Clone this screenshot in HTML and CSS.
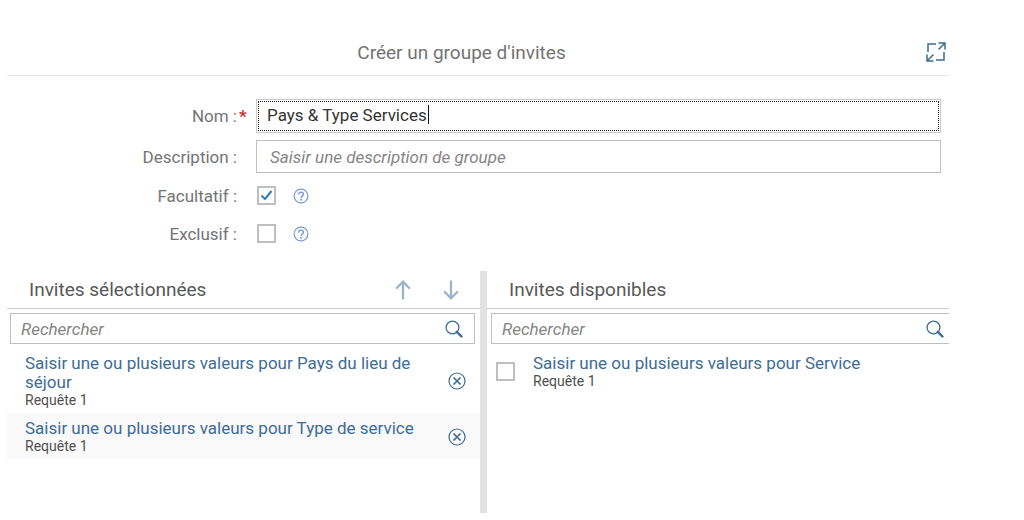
FILE: index.html
```html
<!DOCTYPE html>
<html lang="fr">
<head>
<meta charset="utf-8">
<title>Créer un groupe d'invites</title>
<link rel="stylesheet" href="styles.css">
</head>
<body>
<svg class="sprite" aria-hidden="true">
  <symbol id="search" viewBox="0 0 18 18"><circle cx="7.500" cy="7.500" r="6.400" fill="none" stroke="currentColor" stroke-width="1.300"/><path d="M11.800 11.800 16.500 16.500" stroke="currentColor" stroke-width="2.400" stroke-linecap="round"/></symbol>
  <symbol id="remove" viewBox="0 0 18 18"><circle cx="9" cy="9" r="8" fill="none" stroke="currentColor" stroke-width="1.200"/><path d="M5.500 5.500 12.500 12.500M12.500 5.500 5.500 12.500" stroke="currentColor" stroke-width="1.700"/></symbol>
  <symbol id="help" viewBox="0 0 16 16"><circle cx="8" cy="8" r="6.900" fill="none" stroke="currentColor" stroke-width="1.200"/><path d="M5.700 6.400C5.700 3.300 10.400 3.400 10.400 6.200 10.400 7.900 8.100 7.900 8.100 9.900" fill="none" stroke="currentColor" stroke-width="1.400"/><circle cx="8.100" cy="11.800" r="1"/></symbol>
</svg>
<main class="dialog">
  <header class="dialog-header">
    <h1 class="dialog-title">Créer un groupe d'invites</h1>
    <button class="icon-button expand" type="button" aria-label="Agrandir">
      <svg width="20" height="20" viewBox="0 0 20 20" fill="none" stroke="currentColor" stroke-width="1.500"><path d="M2 10V2H10M10 18H18V10M12.500 1H19V7.500M18.500 1.500 12.500 7.500M1 12.500V19H7.500M1.500 18.500 7.500 12.500"/></svg>
    </button>
  </header>
  <form class="form">
    <div class="row">
      <label class="label required" for="nom">Nom :</label>
      <div class="field focused"><input id="nom" class="text" type="text" value="Pays &amp; Type Services" required><span class="caret"></span></div>
    </div>
    <div class="row">
      <label class="label" for="desc">Description :</label>
      <div class="field"><input id="desc" class="text" type="text" placeholder="Saisir une description de groupe"></div>
    </div>
    <div class="row">
      <label class="label" for="fac">Facultatif :</label>
      <div class="options"><input id="fac" class="check" type="checkbox" checked><button class="icon-button help" type="button" aria-label="Aide"><svg width="16" height="16" fill="currentColor"><use href="#help"/></svg></button></div>
    </div>
    <div class="row">
      <label class="label" for="exc">Exclusif :</label>
      <div class="options"><input id="exc" class="check" type="checkbox"><button class="icon-button help" type="button" aria-label="Aide"><svg width="16" height="16" fill="currentColor"><use href="#help"/></svg></button></div>
    </div>
  </form>
  <div class="panels">
    <section class="panel">
      <div class="panel-header">
        <h2 class="panel-title">Invites sélectionnées</h2>
        <div class="movers">
          <button class="icon-button" type="button" aria-label="Monter" disabled><svg width="16" height="20" viewBox="0 0 16 20" fill="none" stroke="currentColor" stroke-width="2.300" stroke-linecap="round"><path d="M8 18.500V2M1.800 8 8 1.600 14.200 8"/></svg></button>
          <button class="icon-button" type="button" aria-label="Descendre" disabled><svg width="16" height="20" viewBox="0 0 16 20" fill="none" stroke="currentColor" stroke-width="2.300" stroke-linecap="round"><path d="M8 1.500V18M1.800 12 8 18.400 14.200 12"/></svg></button>
        </div>
      </div>
      <div class="search">
        <input class="search-input" type="search" placeholder="Rechercher" aria-label="Rechercher dans les invites sélectionnées">
        <button class="icon-button" type="button" aria-label="Lancer la recherche"><svg width="18" height="18"><use href="#search"/></svg></button>
      </div>
      <ul class="list">
        <li class="item">
          <div class="item-text"><a class="item-link" href="#">Saisir une ou plusieurs valeurs pour Pays du lieu de séjour</a><span class="item-sub">Requête 1</span></div>
          <button class="icon-button" type="button" aria-label="Retirer"><svg width="18" height="18"><use href="#remove"/></svg></button>
        </li>
        <li class="item alternate">
          <div class="item-text"><a class="item-link" href="#">Saisir une ou plusieurs valeurs pour Type de service</a><span class="item-sub">Requête 1</span></div>
          <button class="icon-button" type="button" aria-label="Retirer"><svg width="18" height="18"><use href="#remove"/></svg></button>
        </li>
      </ul>
    </section>
    <div class="splitter"></div>
    <section class="panel">
      <div class="panel-header"><h2 class="panel-title">Invites disponibles</h2></div>
      <div class="search search-open">
        <input class="search-input" type="search" placeholder="Rechercher" aria-label="Rechercher dans les invites disponibles">
        <button class="icon-button" type="button" aria-label="Lancer la recherche"><svg width="18" height="18"><use href="#search"/></svg></button>
      </div>
      <ul class="list">
        <li class="item selectable">
          <input class="check" type="checkbox" aria-label="Sélectionner l'invite Service">
          <div class="item-text"><a class="item-link" href="#">Saisir une ou plusieurs valeurs pour Service</a><span class="item-sub">Requête 1</span></div>
        </li>
      </ul>
    </section>
  </div>
</main>
</body>
</html>
```

FILE: styles.css
```css
* { box-sizing: border-box; }
body {
  margin: 0;
  background: #fff;
  color: #505050;
  font-family: Roboto, "Liberation Sans", sans-serif;
  font-size: 17px;
}
h1, h2, ul { margin: 0; padding: 0; font-weight: 400; }
input { font: inherit; }
.sprite { position: absolute; width: 0; height: 0; }
.dialog { margin: 0 75px 0 7px; padding-top: 29px; }
.icon-button {
  display: flex;
  padding: 0;
  border: 0;
  background: none;
  color: #3d6c98;
}
.icon-button svg { display: block; }

.dialog-header {
  display: flex;
  align-items: center;
  height: 47px;
  border-bottom: 1px solid #e8e8e8;
}
.dialog-title { flex: 1; text-align: center; font-size: 19px; color: #747474; }
.expand { width: 33px; padding-left: 10px; }

.form { display: grid; gap: 7px; padding: 23px 8px 0 0; }
.row {
  display: grid;
  grid-template-columns: 230px minmax(0, 1fr);
  column-gap: 19px;
  align-items: center;
  min-height: 31px;
}
.label { position: relative; text-align: right; line-height: 20px; color: #747474; }
.required::after {
  content: "*";
  position: absolute;
  left: 100%;
  padding-left: 2px;
  color: #c9302c;
  font-weight: 700;
}
.field { position: relative; border: 1px solid #bfbfbf; background: #fff; }
.text {
  display: block;
  width: 100%;
  height: 31px;
  padding: 0 13px;
  border: 0;
  outline: 0;
  background: none;
  color: #333;
}
.text::placeholder, .search-input::placeholder { color: #858585; font-style: italic; opacity: 1; }
.focused { padding: 1px; border-color: #ccc; }
.focused .text { height: 30px; padding: 0 8px 2px; border: 1px dotted #222; }
.caret { position: absolute; left: 171px; top: 5px; width: 1px; height: 19px; background: #111; }
.options { display: flex; align-items: center; gap: 17px; padding-left: 1px; }
.help { color: #7898dc; }
.check {
  appearance: none;
  flex: none;
  width: 19px;
  height: 19px;
  margin: 0;
  border: 2px solid #bfbfbf;
  background: #fff;
}
.check:checked {
  background: #fff url("data:image/svg+xml,%3Csvg xmlns='http://www.w3.org/2000/svg' viewBox='0 0 15 15'%3E%3Cpath d='M2.500 7.500 6 11 12.500 3' fill='none' stroke='%23337ab7' stroke-width='2'/%3E%3C/svg%3E") center / 15px no-repeat;
}

.panels {
  display: grid;
  grid-template-columns: minmax(0, 473fr) 7px minmax(0, 462fr);
  min-height: 242px;
  margin-top: 22px;
}
.splitter { background: #e2e2e2; }
.panel-header {
  display: flex;
  align-items: center;
  justify-content: space-between;
  height: 38px;
  padding: 0 21px 0 22px;
  border-bottom: 1px solid #ccc;
}
.panel-title { font-size: 19px; color: #585858; }
.movers { display: flex; gap: 32px; }
.movers .icon-button { color: #9db4c9; }
.search {
  display: flex;
  align-items: center;
  height: 31px;
  margin: 4px 5px 4px 3px;
  padding: 0 11px 0 10px;
  border: 1px solid #bfbfbf;
}
.search-open { margin: 4px 0 4px 4px; padding-right: 5px; border-right: 0; }
.search-input { flex: 1; min-width: 0; padding: 0; border: 0; outline: 0; background: none; }
.list { list-style: none; }
.item { display: flex; align-items: center; gap: 18px; padding: 6px 14px 5px 18px; }
.item-text { flex: 1; }
.alternate { background: #f9f9f9; }
.selectable { padding-left: 9px; }
.item-link { display: block; line-height: 19px; color: #3d6c98; text-decoration: none; }
.item-sub { display: block; font-size: 14px; line-height: 16px; }
```
